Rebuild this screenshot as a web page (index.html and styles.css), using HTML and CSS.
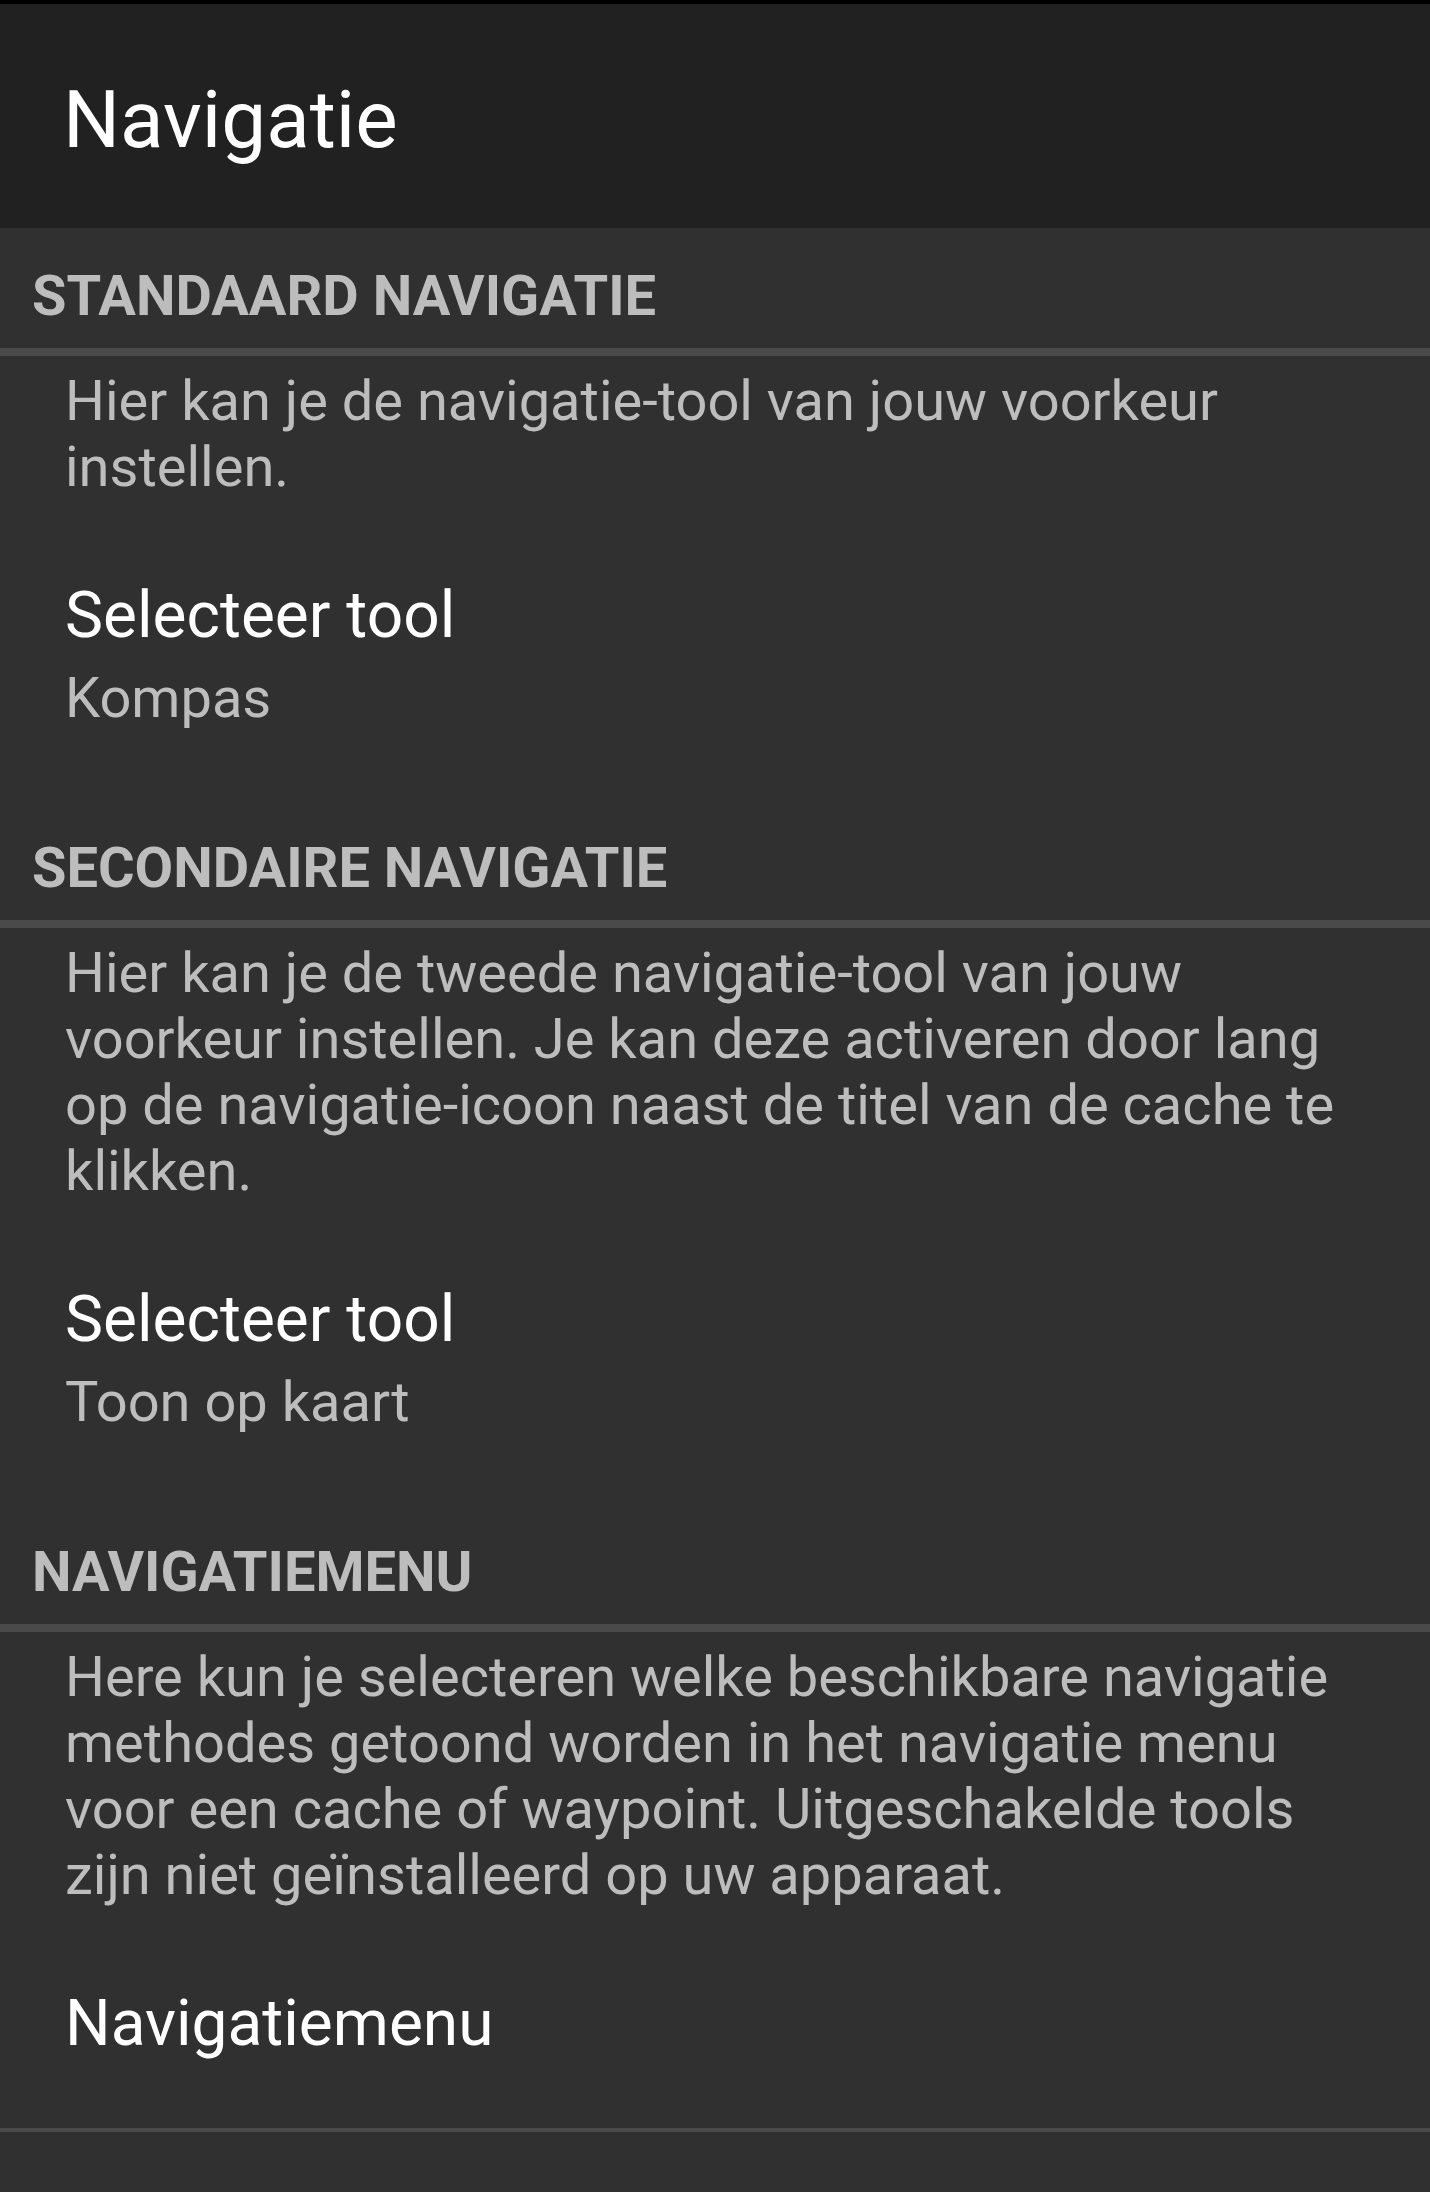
FILE: index.html
```html
<!DOCTYPE html>
<html lang="nl">
<head>
<meta charset="utf-8">
<title>Navigatie</title>
<link rel="stylesheet" href="styles.css">
</head>
<body>
<div class="statusbar"></div>
<header class="toolbar">
  <h1 class="toolbar-title">Navigatie</h1>
</header>
<main class="prefs">
  <section class="category">
    <h2 class="category-title">STANDAARD NAVIGATIE</h2>
    <p class="category-desc">Hier kan je de navigatie-tool van jouw voorkeur instellen.</p>
    <div class="pref">
      <div class="pref-title">Selecteer tool</div>
      <div class="pref-summary">Kompas</div>
    </div>
  </section>
  <section class="category">
    <h2 class="category-title">SECONDAIRE NAVIGATIE</h2>
    <p class="category-desc">Hier kan je de tweede navigatie-tool van jouw voorkeur instellen. Je kan deze activeren door lang op de navigatie-icoon naast de titel van de cache te klikken.</p>
    <div class="pref">
      <div class="pref-title">Selecteer tool</div>
      <div class="pref-summary">Toon op kaart</div>
    </div>
  </section>
  <section class="category">
    <h2 class="category-title">NAVIGATIEMENU</h2>
    <p class="category-desc">Here kun je selecteren welke beschikbare navigatie methodes getoond worden in het navigatie menu voor een cache of waypoint. Uitgeschakelde tools zijn niet geïnstalleerd op uw apparaat.</p>
    <div class="pref pref-last">
      <div class="pref-title">Navigatiemenu</div>
    </div>
  </section>
</main>
</body>
</html>
```
FILE: styles.css
```css
html, body {
  margin: 0;
  padding: 0;
}
body {
  background: #303030;
  font-family: Roboto, "Noto Sans", "Liberation Sans", sans-serif;
  min-height: 2192px;
}
.statusbar {
  height: 4px;
  background: #000;
}
.toolbar {
  background: #212121;
  height: 224px;
  box-sizing: border-box;
  padding: 76px 0 0 63px;
}
.toolbar-title {
  margin: 0;
  font-weight: 400;
  font-size: 80px;
  line-height: 80px;
  color: #ffffff;
}
.category-title {
  margin: 0;
  padding: 40px 32px 24px;
  font-weight: 700;
  font-size: 56px;
  line-height: 56px;
  color: #bdbdbd;
  border-bottom: 8px solid #4a4a4a;
}
.category-desc {
  margin: 0;
  padding: 12px 62px 0 65px;
  font-size: 56px;
  line-height: 66px;
  color: #bdbdbd;
}
.pref {
  padding: 78px 62px 69px 65px;
}
.pref-last {
  padding-bottom: 66px;
  border-bottom: 4px solid #4a4a4a;
}
.pref-title {
  font-size: 64px;
  line-height: 76px;
  color: #ffffff;
}
.pref-summary {
  margin-top: 11px;
  font-size: 56px;
  line-height: 66px;
  color: #bdbdbd;
}
```
